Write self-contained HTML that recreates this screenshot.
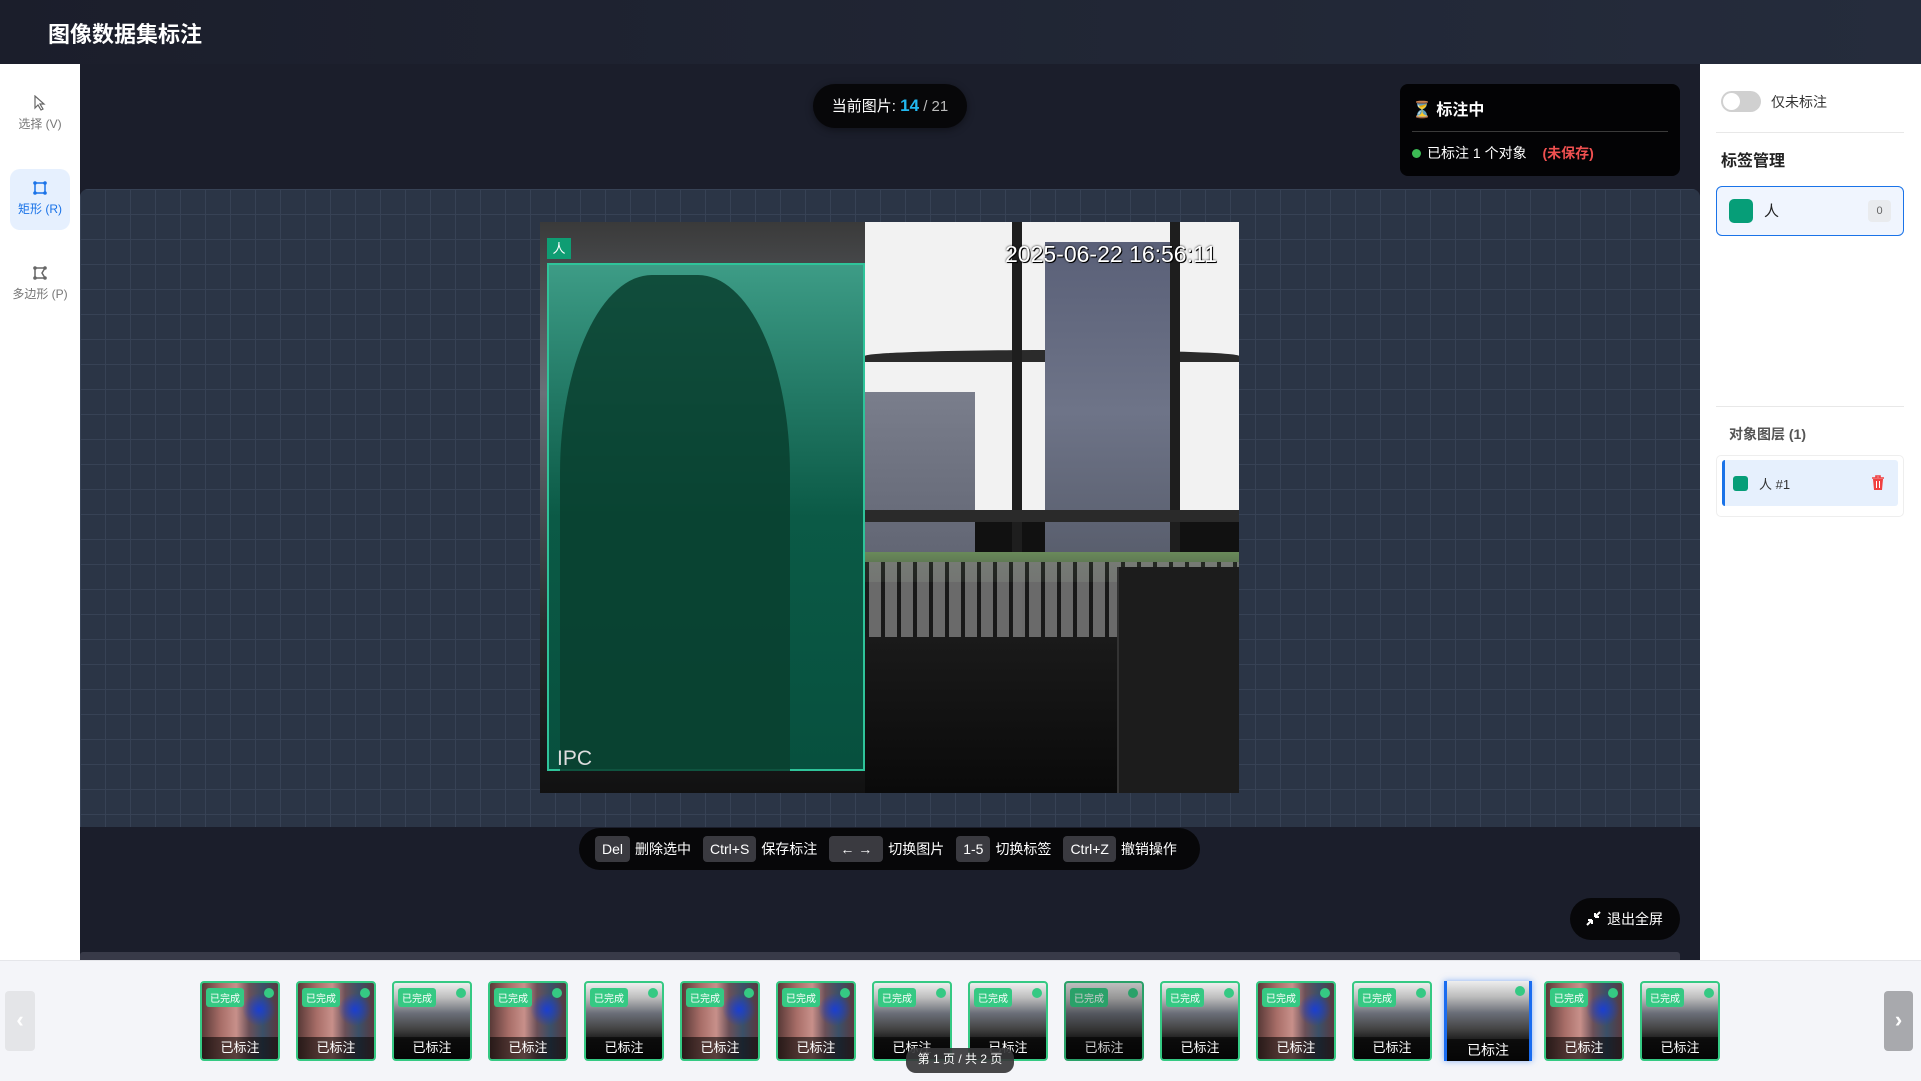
<!DOCTYPE html>
<html><head><meta charset="utf-8">
<style>
*{box-sizing:border-box;margin:0;padding:0}
body{width:1921px;height:1081px;overflow:hidden;position:relative;background:#1b1e2b;font-family:"Liberation Sans","Noto Sans CJK SC",sans-serif}
.abs{position:absolute}
.header{left:0;top:0;width:1921px;height:64px;background:linear-gradient(90deg,#1b1e2b,#252c3c);}
.title{left:48px;top:17px;color:#fff;font-size:22px;font-weight:bold}
.side{left:0;top:64px;width:80px;height:896px;background:#fff}
.tool{position:absolute;left:10px;width:60px;height:61px;text-align:center;font-size:12px;color:#777}
.canvas{left:80px;top:64px;width:1620px;height:896px;background:#1b1e2b}
.grid{left:80px;top:189px;width:1620px;height:638px;border-radius:8px 8px 0 0;background-color:#2b3546;
background-image:linear-gradient(#374255 1px,transparent 1px),linear-gradient(90deg,#374255 1px,transparent 1px);background-size:25px 25px;background-position:0 0}
.pill{left:813px;top:84px;width:154px;height:44px;border-radius:22px;background:#070709;color:#fff;font-size:15px;line-height:44px;text-align:center;box-shadow:0 2px 8px rgba(0,0,0,.4)}
.status{left:1400px;top:84px;width:280px;height:92px;border-radius:8px;background:#030305;color:#fff}
.right{left:1700px;top:64px;width:221px;height:896px;background:#fff}
.film{left:0;top:960px;width:1921px;height:121px;background:#f4f5f9;border-top:1px solid #e5e6ea}
.th{position:absolute;top:981px;width:80px;height:80px;border:2px solid #35c983;border-radius:4px;overflow:hidden}
.th .b{position:absolute;left:4px;top:5px;background:#35c983;color:#fff;font-size:10px;padding:2px 4px;border-radius:3px}
.th .d{position:absolute;right:4px;top:5px;width:10px;height:10px;border-radius:50%;background:#35c983}
.th .l{position:absolute;left:0;bottom:0;width:100%;height:22px;background:rgba(0,0,0,.55);color:#fff;font-size:13px;text-align:center;line-height:22px}
.dance{background:radial-gradient(circle at 75% 35%,#1b3fd0 0,transparent 22%),linear-gradient(90deg,#5a3a38 0,#a86e68 25%,#c8908a 45%,#6b5058 62%,#3a5068 80%,#5a3a40 100%)}
.bld{background:linear-gradient(180deg,#eee 0,#bbb 20%,#6a6e78 40%,#444 60%,#1a1a1a 75%,#0c0c0c 100%)}
.key{display:inline-block;background:#3a3a40;color:#fff;border-radius:4px;padding:0 7px;height:26px;line-height:26px;font-size:14px;margin:0 5px 0 0}
.kt{color:#fff;font-size:14px;margin-right:12px}
</style></head><body>
<div class="abs header"></div>
<div class="abs title">图像数据集标注</div>
<div class="abs side">
 <div class="tool" style="top:20px;background:transparent">
  <svg width="14" height="16" viewBox="0 0 14 16" style="margin-top:11px"><path d="M2 1 L2 13 L5 10 L8 15 L10 14 L7 9 L11 9 Z" fill="none" stroke="#666" stroke-width="1.2"/></svg>
  <div style="margin-top:1px">选择 (V)</div></div>
 <div class="tool" style="top:105px;background:#e6f0fe;border-radius:10px;color:#1a73e8">
  <svg width="16" height="16" viewBox="0 0 16 16" style="margin-top:11px"><rect x="3" y="3" width="10" height="10" fill="none" stroke="#1a73e8" stroke-width="1.5"/><g fill="#1a73e8"><circle cx="3" cy="3" r="1.8"/><circle cx="13" cy="3" r="1.8"/><circle cx="3" cy="13" r="1.8"/><circle cx="13" cy="13" r="1.8"/></g></svg>
  <div style="margin-top:1px">矩形 (R)</div></div>
 <div class="tool" style="top:190px">
  <svg width="16" height="16" viewBox="0 0 16 16" style="margin-top:11px"><path d="M3 3 L13 3 L10 8 L13 13 L3 13 Z" fill="none" stroke="#666" stroke-width="1.5"/><g fill="#666"><circle cx="3" cy="3" r="1.8"/><circle cx="13" cy="3" r="1.8"/><circle cx="3" cy="13" r="1.8"/><circle cx="13" cy="13" r="1.8"/></g></svg>
  <div style="margin-top:1px">多边形 (P)</div></div>
</div>
<div class="abs canvas"></div>
<div class="abs grid"></div>
<div class="abs" style="left:80px;top:952px;width:1600px;height:8px;background:#383a48;border-radius:3px 3px 0 0"></div>
<div class="abs pill">当前图片: <b style="color:#22b8f0;font-size:17px">14</b> <span style="color:#bbb">/ 21</span></div>
<div class="abs status">
 <div style="position:absolute;left:12px;top:12px;font-size:16px;font-weight:bold"><span style="color:#e8a030">⏳</span> 标注中</div>
 <div style="position:absolute;left:12px;right:12px;top:47px;height:1px;background:#3a3a3a"></div>
 <div style="position:absolute;left:12px;top:59px;font-size:14px"><span style="display:inline-block;width:9px;height:9px;border-radius:50%;background:#3cba54;margin-right:6px"></span>已标注 1 个对象 <span style="color:#f05050;font-weight:bold;margin-left:12px">(未保存)</span></div>
</div>
<!-- image -->
<div class="abs" style="left:540px;top:222px;width:699px;height:571px;overflow:hidden;background:#111">
 <div class="abs" style="left:0;top:0;width:325px;height:571px;background:linear-gradient(180deg,#3a3a3a,#6a7078 30%,#2a2e30 70%,#111)"></div>
 <div class="abs" style="left:325px;top:0;width:374px;height:300px;background:#f2f2f2"></div>
 <div class="abs" style="left:325px;top:128px;width:374px;height:12px;background:#2b2b2b;border-radius:50% 50% 0 0"></div>
 <div class="abs" style="left:325px;top:170px;width:110px;height:190px;background:linear-gradient(180deg,#7a7e8c,#5e6270)"></div>
 <div class="abs" style="left:505px;top:20px;width:125px;height:340px;background:linear-gradient(180deg,#5a6078,#6e7488 50%,#555a68)"></div>
 <div class="abs" style="left:472px;top:0;width:10px;height:420px;background:#1e1e1e"></div>
 <div class="abs" style="left:630px;top:0;width:10px;height:420px;background:#1e1e1e"></div>
 <div class="abs" style="left:325px;top:288px;width:374px;height:12px;background:#2a2a2a"></div>
 <div class="abs" style="left:325px;top:330px;width:374px;height:30px;background:linear-gradient(180deg,#6a8a5a,#4a5a48)"></div>
 <div class="abs" style="left:325px;top:340px;width:374px;height:80px;background:repeating-linear-gradient(90deg,#1a1a1a 0 4px,#7a7a7a 4px 16px);opacity:.85"></div>
 <div class="abs" style="left:325px;top:415px;width:374px;height:156px;background:linear-gradient(180deg,#1a1a1a,#0a0a0a)"></div>
 <div class="abs" style="left:577px;top:345px;width:122px;height:226px;background:#1c1c1c;border-left:2px solid #333"></div>
 <div class="abs" style="left:465px;top:19px;color:#fff;font-size:23px;font-family:'Liberation Sans';text-shadow:0 0 2px #000,1px 1px 0 #000">2025-06-22 16:56:11</div>
</div>
<div class="abs" style="left:547px;top:263px;width:318px;height:508px;border:2px solid #2fc49a;background:linear-gradient(180deg,#3d9c86 0,#237a66 25%,#0b5a46 50%,#07503e 100%)"></div>
<div class="abs" style="left:560px;top:275px;width:230px;height:496px;background:#09402f;border-radius:40% 40% 0 0;opacity:.85"></div>
<div class="abs" style="left:557px;top:747px;color:#ddd;font-size:21px">IPC</div>
<div class="abs" style="left:547px;top:238px;width:24px;height:21px;background:#0f9d73;color:#fff;font-size:13px;text-align:center;line-height:21px">人</div>
<!-- shortcuts -->
<div class="abs" style="left:579px;top:828px;width:621px;height:42px;border-radius:21px;background:#070709;padding:8px 0 0 16px;white-space:nowrap">
 <span class="key">Del</span><span class="kt">删除选中</span><span class="key">Ctrl+S</span><span class="kt">保存标注</span><span class="key" style="padding:0 11px">← →</span><span class="kt">切换图片</span><span class="key">1-5</span><span class="kt">切换标签</span><span class="key">Ctrl+Z</span><span class="kt" style="margin:0">撤销操作</span>
</div>
<div class="abs" style="left:1570px;top:898px;width:110px;height:42px;border-radius:21px;background:#070709;color:#fff;font-size:14px;line-height:42px;padding-left:16px">
 <svg width="15" height="15" viewBox="0 0 15 15" style="vertical-align:-2px;margin-right:6px"><path d="M1 14 L6 9 M6 9 L2 9 M6 9 L6 13 M14 1 L9 6 M9 6 L13 6 M9 6 L9 2" stroke="#fff" stroke-width="2" fill="none"/></svg>退出全屏</div>
<!-- right panel -->
<div class="abs right">
 <div class="abs" style="left:21px;top:27px;width:40px;height:21px;border-radius:11px;background:#d0d0d0"><div style="position:absolute;left:2px;top:2px;width:17px;height:17px;border-radius:50%;background:#fff"></div></div>
 <div class="abs" style="left:71px;top:28px;font-size:14px;color:#333">仅未标注</div>
 <div class="abs" style="left:16px;top:68px;width:188px;height:1px;background:#e8e8e8"></div>
 <div class="abs" style="left:21px;top:83px;font-size:16px;font-weight:bold;color:#222">标签管理</div>
 <div class="abs" style="left:16px;top:122px;width:188px;height:50px;border:1.5px solid #1a73e8;border-radius:6px;background:#f0f5fe">
  <div class="abs" style="left:12px;top:12px;width:24px;height:24px;border-radius:5px;background:#069e78"></div>
  <div class="abs" style="left:47px;top:13px;font-size:15px;color:#222">人</div>
  <div class="abs" style="left:151px;top:13px;width:23px;height:22px;border-radius:4px;background:#e9ebee;color:#666;font-size:11px;text-align:center;line-height:22px">0</div>
 </div>
 <div class="abs" style="left:16px;top:342px;width:188px;height:1px;background:#e8e8e8"></div>
 <div class="abs" style="left:29px;top:360px;font-size:14px;color:#555;font-weight:bold">对象图层 (1)</div>
 <div class="abs" style="left:16px;top:391px;width:188px;height:62px;border:1px solid #eee;border-radius:5px;background:#fff">
  <div class="abs" style="left:5px;top:4px;width:176px;height:46px;background:#e6f0fd;border-left:3px solid #1a73e8;border-radius:3px">
   <div class="abs" style="left:8px;top:16px;width:15px;height:15px;border-radius:3px;background:#069e78"></div>
   <div class="abs" style="left:34px;top:14px;font-size:13px;color:#333">人 #1</div>
   <svg class="abs" style="left:146px;top:15px" width="14" height="16" viewBox="0 0 14 16"><path d="M1 3 H13 M5 3 V1 H9 V3" stroke="#f04040" stroke-width="1.6" fill="none"/><path d="M2 4 H12 L11 15 H3 Z" fill="#f04040"/><path d="M5.5 6 V13 M8.5 6 V13" stroke="#fff" stroke-width="1"/></svg>
  </div>
 </div>
</div>
<!-- filmstrip -->
<div class="abs film"></div>
<div class="abs" style="left:5px;top:991px;width:30px;height:60px;border-radius:4px;background:#e4e5e8;color:#fff;font-size:22px;text-align:center;line-height:58px;font-weight:bold">‹</div>
<div class="abs" style="left:1884px;top:991px;width:29px;height:60px;border-radius:4px;background:#a8a9ad;color:#fff;font-size:22px;text-align:center;line-height:58px;font-weight:bold">›</div>
<div class="th dance" style="left:200px"><div class="b">已完成</div><div class="d"></div><div class="l">已标注</div></div>
<div class="th dance" style="left:296px"><div class="b">已完成</div><div class="d"></div><div class="l">已标注</div></div>
<div class="th bld" style="left:392px"><div class="b">已完成</div><div class="d"></div><div class="l">已标注</div></div>
<div class="th dance" style="left:488px"><div class="b">已完成</div><div class="d"></div><div class="l">已标注</div></div>
<div class="th bld" style="left:584px"><div class="b">已完成</div><div class="d"></div><div class="l">已标注</div></div>
<div class="th dance" style="left:680px"><div class="b">已完成</div><div class="d"></div><div class="l">已标注</div></div>
<div class="th dance" style="left:776px"><div class="b">已完成</div><div class="d"></div><div class="l">已标注</div></div>
<div class="th bld" style="left:872px"><div class="b">已完成</div><div class="d"></div><div class="l">已标注</div></div>
<div class="th bld" style="left:968px"><div class="b">已完成</div><div class="d"></div><div class="l">已标注</div></div>
<div class="th bld" style="left:1064px;filter:brightness(.8)"><div class="b">已完成</div><div class="d"></div><div class="l">已标注</div></div>
<div class="th bld" style="left:1160px"><div class="b">已完成</div><div class="d"></div><div class="l">已标注</div></div>
<div class="th dance" style="left:1256px"><div class="b">已完成</div><div class="d"></div><div class="l">已标注</div></div>
<div class="th bld" style="left:1352px"><div class="b">已完成</div><div class="d"></div><div class="l">已标注</div></div>
<div class="th bld" style="left:1444px;width:88px;border:none;border-left:3px solid #1a6cf0;border-right:3px solid #1a6cf0;border-radius:0;box-shadow:0 0 6px rgba(26,108,240,.5)"><div class="d"></div><div class="l" style="font-size:14px">已标注</div></div>
<div class="th dance" style="left:1544px"><div class="b">已完成</div><div class="d"></div><div class="l">已标注</div></div>
<div class="th bld" style="left:1640px"><div class="b">已完成</div><div class="d"></div><div class="l">已标注</div></div>
<div class="abs" style="left:906px;top:1048px;width:108px;height:25px;border-radius:10px;background:rgba(55,55,58,.92);color:#fff;font-size:12px;text-align:center;line-height:22px">第 1 页 / 共 2 页</div>
</body></html>
